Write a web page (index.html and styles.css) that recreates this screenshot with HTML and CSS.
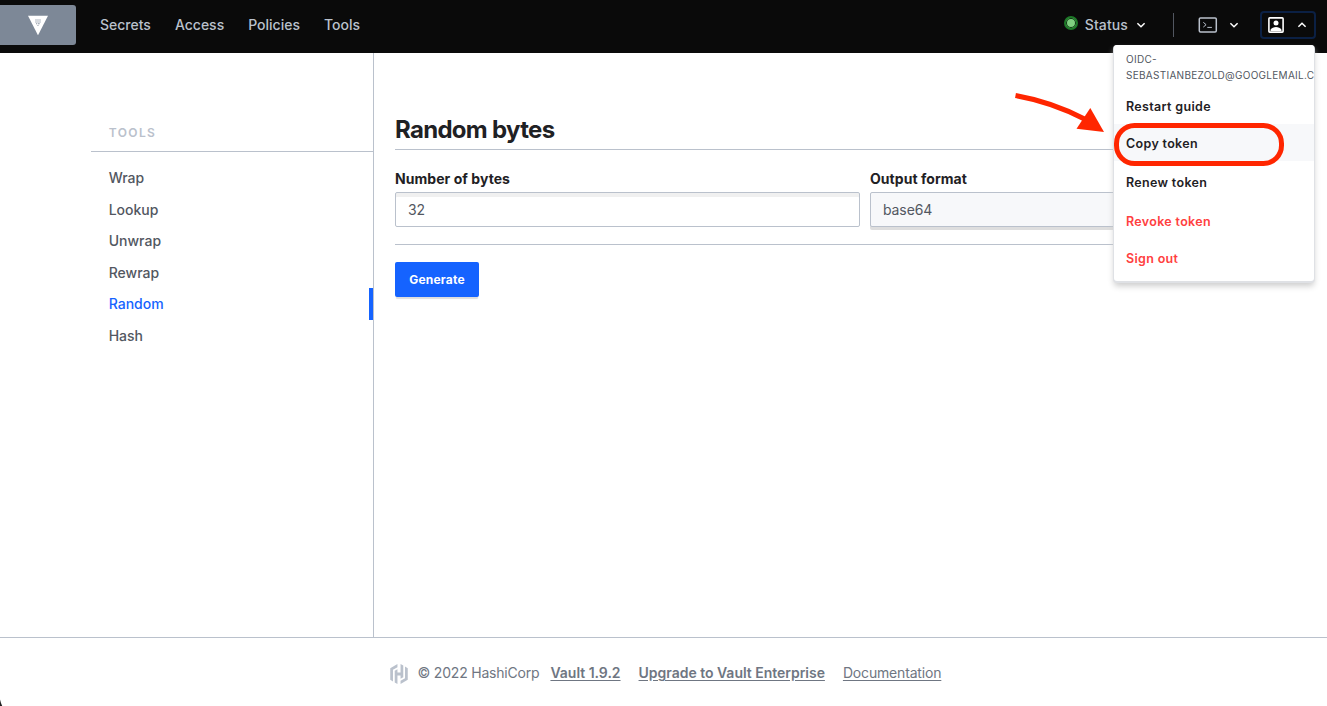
FILE: index.html
```html
<!DOCTYPE html>
<html lang="en">
<head>
<meta charset="utf-8">
<title>Vault</title>
<link rel="stylesheet" href="styles.css">
</head>
<body>
<div class="app">
  <header class="navbar">
    <a class="brand">
      <svg width="20" height="20" viewBox="0 0 20 20"><path fill="#fff" d="M0 .8h20L10 20.300z"/><path fill="#8d97a5" d="M7.300 4.500h1.400v1H7.300zM9.300 4.500h1.400v1H9.300zM11.300 4.500h1.400v1h-1.400zM7.300 6.500h1.400v1H7.300zM9.300 6.500h1.400v1H9.300zM11.300 6.500h1.400v1h-1.400zM8 8.300h1.300v1H8zM10 8.300h1.700v1H10zM9.300 10.200h1.300v.9H9.300z"/></svg>
    </a>
    <nav class="main-nav"><a>Secrets</a><a>Access</a><a>Policies</a><a>Tools</a></nav>
    <div class="nav-right">
      <div class="status">
        <span class="status-dot"></span><span>Status</span>
        <svg class="chevron" width="10" height="6" viewBox="0 0 10 6"><path d="M1.4 1.2 5 4.7l3.6-3.5"/></svg>
      </div>
      <div class="console">
        <svg width="20" height="16" viewBox="0 0 20 16" fill="none" stroke="#bac1cc"><rect x="1.3" y=".9" width="17" height="14" rx="1.2" stroke-width="1.5"/><path d="m5.3 5.3 2.8 2.4-2.8 2.4M9.3 10.4h4.6"/></svg>
        <svg class="chevron" width="10" height="6" viewBox="0 0 10 6"><path d="M1.4 1.2 5 4.7l3.6-3.5"/></svg>
      </div>
      <div class="user">
        <svg width="16" height="16" viewBox="0 0 16 16"><rect x=".9" y=".9" width="14.2" height="14.2" rx=".9" fill="none" stroke="#fff" stroke-width="1.6"/><circle cx="8" cy="6" r="2.5" fill="#fff"/><path fill="#fff" d="M2.5 14v-1.2C3.5 11 6 10 8 10s4.5 1 5.5 2.8V14z"/></svg>
        <svg class="chevron" width="10" height="6" viewBox="0 0 10 6"><path d="M1.4 4.8 5 1.3l3.6 3.5"/></svg>
      </div>
    </div>
  </header>
  <div class="body">
    <aside class="sidebar">
      <h2 class="side-title">Tools</h2>
      <nav class="side-nav"><a>Wrap</a><a>Lookup</a><a>Unwrap</a><a>Rewrap</a><a class="active">Random</a><a>Hash</a></nav>
    </aside>
    <main class="content">
      <h1 class="title">Random bytes</h1>
      <div class="fields">
        <div class="field field-bytes"><div class="label">Number of bytes</div><div class="control input">32</div></div>
        <div class="field field-format"><div class="label">Output format</div><div class="control select">base64</div></div>
      </div>
      <a class="button">Generate</a>
    </main>
  </div>
  <footer class="footer">
    <svg class="logo" width="20" height="20" viewBox="0 0 24 24" fill="#bac1cc"><path d="M10.140 0 1.500 4.990V18.970l3.260 1.890V6.870l5.380-3.110zM13.860 0v10.140h-3.720V6.350L6.880 8.230v13.900L10.140 24V13.900h3.720v3.750l3.260-1.880V1.870zM13.860 24l8.640-4.990V5.030l-3.260-1.890v13.990l-5.380 3.110z"/></svg>
    <span class="copyright">© 2022 HashiCorp</span>
    <a class="version">Vault 1.9.2</a><a class="upgrade">Upgrade to Vault Enterprise</a><a class="docs">Documentation</a>
  </footer>
  <div class="menu">
    <div class="menu-label">OIDC-<br>sebastianbezold@googlemail.c</div>
    <a class="item restart">Restart guide</a>
    <a class="item copy">Copy token</a>
    <a class="item renew">Renew token</a>
    <a class="item revoke">Revoke token</a>
    <a class="item signout">Sign out</a>
  </div>
  <svg class="annotation" width="1327" height="706" viewBox="0 0 1327 706"><path d="M1015.5 95.5Q1052 102 1084.5 119" fill="none" stroke="#ff2600" stroke-width="5"/><path d="M1090.3 108 1104 132l-27.500-3.300z" fill="#ff2600"/><rect x="1116.5" y="125.500" width="165" height="38" rx="18" fill="none" stroke="#ff2600" stroke-width="5"/><path d="M0 699.500V706h2.200Q.8 703 0 699.500z" fill="#222"/></svg>
</div>
</body>
</html>
```
FILE: styles.css
```css
* { box-sizing: border-box; }
body { margin: 0; font-family: Inter, "Liberation Sans", sans-serif; color: #1f2124; background: #fff; overflow: hidden; }
svg { display: block; flex: none; }
.app { width: 1327px; height: 706px; display: flex; flex-direction: column; position: relative; overflow: hidden; }
.navbar { height: 53px; flex: none; background: #0a0a0a; display: flex; align-items: flex-start; padding-top: 5px; color: #bac1cc; font-size: 14px; font-weight: 500; letter-spacing: .12px; }
.brand { width: 76px; height: 40px; background: #7d8897; border-radius: 0 3px 3px 0; display: flex; align-items: center; justify-content: center; }
.main-nav { display: flex; gap: 24px; padding-left: 24px; line-height: 40px; letter-spacing: 0; }
.nav-right { margin-left: auto; display: flex; height: 40px; align-items: center; padding-right: 11px; }
.status { display: flex; align-items: center; line-height: 40px; }
.status-dot { width: 14px; height: 14px; border-radius: 50%; background: #7fd080; border: 2px solid #1d7a28; box-shadow: inset 0 0 0 1px #0c2e10; margin: -4px 7px 0 0; }
.chevron { fill: none; stroke: #fff; stroke-width: 1.5; }
.status .chevron { margin-left: 8px; }
.console { display: flex; align-items: center; height: 24px; border-left: 1px solid #525761; margin-left: 27px; padding-left: 24px; }
.console .chevron { margin-left: 11px; }
.user { display: flex; align-items: center; width: 56px; height: 28px; margin-left: 21px; border: 2px solid #0b2044; border-radius: 4px; padding-left: 6px; }
.user .chevron { margin-left: 13px; }
.body { display: flex; flex: none; height: 584px; padding-left: 91px; }
.sidebar { width: 283px; border-right: 1px solid #bac1cc; padding-top: 72px; }
.side-title { margin: 0; height: 27px; padding-left: 17.7px; border-bottom: 1px solid #bac1cc; font-size: 12px; line-height: 16px; font-weight: 600; letter-spacing: 1.4px; text-transform: uppercase; color: #bac1cc; }
.side-nav { padding-top: 10.2px; display: flex; flex-direction: column; }
.side-nav a { height: 31.5px; line-height: 31.5px; padding-left: 17.7px; font-size: 14px; font-weight: 500; color: #525761; }
.side-nav .active { color: #1563ff; border-right: 4px solid #1563ff; }
.content { width: 862px; padding: 60px 21px 0; }
.title { margin: 0; height: 37px; line-height: 34px; font-size: 24px; font-weight: 700; letter-spacing: -.7px; border-bottom: 1px solid #bac1cc; }
.fields { display: flex; gap: 10px; height: 95px; padding-top: 19px; border-bottom: 1px solid #bac1cc; }
.field-bytes { width: 465px; }
.field-format { flex: 1; }
.label { font-size: 14px; font-weight: 700; line-height: 20px; margin-bottom: 3px; letter-spacing: .05px; }
.control { height: 35px; border: 1px solid #bac1cc; border-radius: 2px; padding-left: 12px; line-height: 34px; font-size: 14px; letter-spacing: -.1px; color: #525761; }
.input { box-shadow: inset 0 4px #f0f0f0; }
.select { background: #f7f8fa; box-shadow: 0 3px #dedede; }
.button { display: block; width: 84px; height: 35px; margin-top: 17px; border-radius: 2px; background: #1563ff; color: #fff; font-size: 12px; font-weight: 700; letter-spacing: .2px; line-height: 35px; text-align: center; box-shadow: 0 3px 1px -1px #ddd; }
.footer { flex: 1; border-top: 1px solid #bac1cc; display: flex; align-items: center; padding: 1px 0 0 389px; font-size: 14px; color: #6f7682; }
.footer a { text-decoration: underline; text-underline-offset: 2px; }
.logo { position: relative; top: 1px; }
.copyright { margin-left: 8.5px; letter-spacing: -.2px; }
.version, .upgrade { font-weight: 600; letter-spacing: -.02px; }
.version { margin-left: 11px; }
.upgrade, .docs { margin-left: 18px; }
.docs { letter-spacing: -.17px; }
.menu { position: absolute; left: 1114px; top: 45px; width: 200px; height: 236px; background: #fff; border-radius: 3px; box-shadow: 0 1px 0 1px #dfe1e5, 0 5px 6px #ccc; overflow: hidden; display: flex; flex-direction: column; }
.menu-label { height: 43px; padding: 6px 0 0 12px; font-size: 10px; letter-spacing: .28px; line-height: 16px; text-transform: uppercase; color: #525761; white-space: nowrap; }
.item { padding-left: 12px; font-size: 12.5px; font-weight: 600; height: 36px; line-height: 37px; letter-spacing: .33px; }
.copy { background: #f7f8fa; height: 37px; line-height: 39px; }
.renew { height: 40px; line-height: 43px; }
.revoke { height: 37px; line-height: 41px; }
.signout { line-height: 41px; }
.revoke, .signout { color: #ff4040; }
.annotation { position: absolute; left: 0; top: 0; pointer-events: none; }
```
